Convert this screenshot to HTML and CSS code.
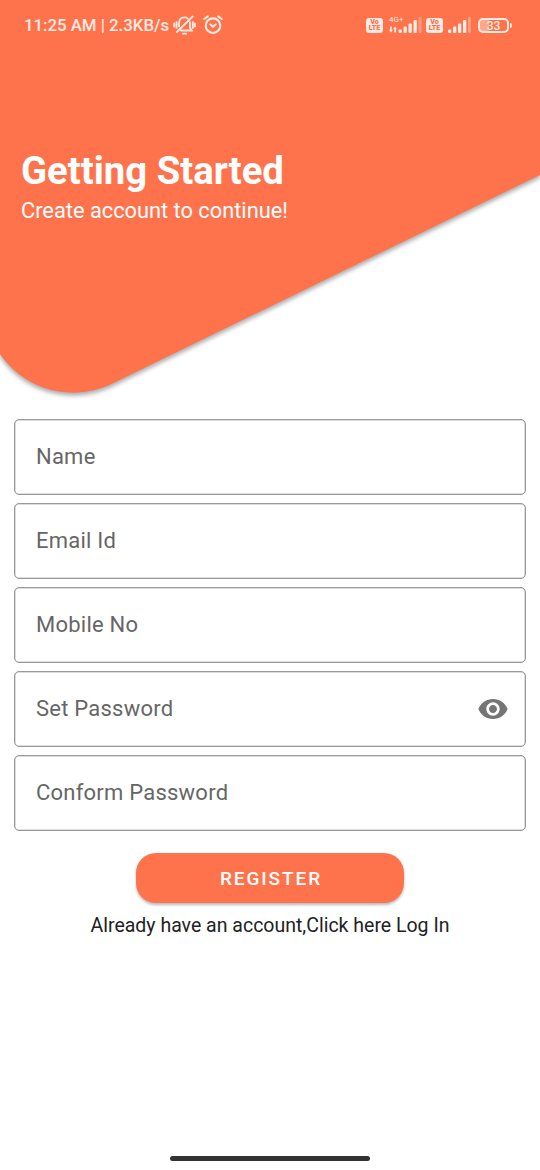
FILE: index.html
```html
<!DOCTYPE html>
<html lang="en">
<head>
<meta charset="utf-8">
<title>Getting Started</title>
<link rel="stylesheet" href="styles.css">
</head>
<body>
<main class="screen">
  <header class="hero">
    <svg class="hero-shape" width="540" height="410" viewBox="0 0 540 410" aria-hidden="true">
      <path d="M-20 -20H560V165.2L111.5 384A89 89 0 0 1 -8 340L-20 318Z"/>
    </svg>
    <div class="status">
      <span class="clock">11:25 AM | 2.3KB/s</span>
      <svg class="mute" width="23" height="22" viewBox="0 0 24 22" fill="none" stroke="currentColor" stroke-width="2" stroke-linecap="round">
        <path d="M6.300 12.300V9.300C6.300 5.500 8.500 3 12 3c1.400 0 2.500.4 3.400 1.100M17.700 8v6l1.800 2.700H8.500M10.300 20h3.400M4 18.300 20.500 2.200M3.700 8v6M1.200 9.500v3M20.700 8v6M22.900 9.500v3"/>
      </svg>
      <svg class="alarm" width="20" height="20" viewBox="0 0 20 20" fill="none" stroke="currentColor" stroke-width="2.100" stroke-linecap="round">
        <circle cx="10" cy="10.700" r="7.300"/><path d="M1.300 4 4.800 1.300M18.700 4 15.200 1.300M7.400 9.500 10 11.700 12.700 9.500"/>
      </svg>
      <span class="spacer"></span>
      <span class="volte"><b>Vo</b><b>LTE</b></span>
      <span class="network">
        <span class="gen">4G+</span>
        <svg width="34" height="16" viewBox="0 0 34 16" fill="currentColor">
          <path d="M2.700 9.500v3.200H4L1.900 15.500 0 12.700h1.200V9.500zM5.300 15.500v-3.200H4L6.100 9.500l1.900 2.800H6.900v3.200z"/>
          <rect x="9.500" y="12.500" width="3.300" height="3.500" rx="1"/><rect x="14.500" y="9.500" width="3.300" height="6.500" rx="1"/><rect x="19.500" y="6.500" width="3.300" height="9.500" rx="1"/><rect x="24.500" y="3" width="3.300" height="13" rx="1"/><rect x="29.500" y="0" width="3" height="16" rx="1" opacity=".35"/>
        </svg>
      </span>
      <span class="volte second"><b>Vo</b><b>LTE</b></span>
      <svg class="bars" width="24" height="16" viewBox="9.500 0 24 16" fill="currentColor">
        <rect x="9.500" y="12.500" width="3.300" height="3.500" rx="1"/><rect x="14.500" y="9.500" width="3.300" height="6.500" rx="1"/><rect x="19.500" y="6.500" width="3.300" height="9.500" rx="1"/><rect x="24.500" y="3" width="3.300" height="13" rx="1"/><rect x="29.500" y="0" width="3" height="16" rx="1" opacity=".35"/>
      </svg>
      <span class="battery">33</span><span class="battery-tip"></span>
    </div>
    <h1 class="title">Getting Started</h1>
    <p class="subtitle">Create account to continue!</p>
  </header>
  <form class="form">
    <div class="field"><span class="label">Name</span></div>
    <div class="field"><span class="label">Email Id</span></div>
    <div class="field"><span class="label">Mobile No</span></div>
    <div class="field"><span class="label">Set Password</span>
      <svg class="eye" width="32" height="32" viewBox="0 0 24 24" fill="currentColor"><path d="M12 4.500C7 4.500 2.730 7.610 1 12c1.730 4.390 6 7.500 11 7.500s9.270-3.110 11-7.500c-1.730-4.390-6-7.500-11-7.500zM12 17c-2.760 0-5-2.240-5-5s2.240-5 5-5 5 2.240 5 5-2.240 5-5 5zm0-8c-1.660 0-3 1.340-3 3s1.340 3 3 3 3-1.340 3-3-1.340-3-3-3z"/></svg>
    </div>
    <div class="field"><span class="label">Conform Password</span></div>
    <button class="register" type="button">REGISTER</button>
    <p class="login">Already have an account,Click here Log In</p>
  </form>
  <div class="home-bar"></div>
</main>
</body>
</html>
```
FILE: styles.css
```css
* { box-sizing: border-box; }
body { margin: 0; background: #fff; font-family: Roboto, "Liberation Sans", sans-serif; }
.screen { width: 540px; height: 1170px; display: flex; flex-direction: column; overflow: hidden; position: relative; }
.hero { height: 419px; flex: none; position: relative; isolation: isolate; color: #fff; }
.hero-shape { position: absolute; inset: 0; z-index: -1; fill: #ff734c; filter: drop-shadow(0 3px 2px rgba(0,0,0,.32)); }
.status { height: 50px; padding: 0 28px 0 24px; display: flex; align-items: center; color: #ffebe3; }
.clock { font-size: 16.800px; font-weight: 500; line-height: 20px; white-space: nowrap; width: 149px; }
.alarm { margin-left: 7px; }
.spacer { flex: 1; }
.volte { width: 17px; height: 15px; border-radius: 3px; background: #ffebe3; color: #f2744f; display: flex; flex-direction: column; align-items: center; justify-content: center; }
.volte b { font-size: 7px; line-height: 6px; font-weight: 900; }
.network { position: relative; margin-left: 6px; height: 16px; width: 34px; }
.network svg { display: block; }
.gen { position: absolute; left: 0; top: -2px; font-size: 8px; line-height: 9px; }
.second { margin-left: 3px; }
.bars { margin-left: 5px; }
.battery { margin-left: 6px; width: 31px; height: 15px; border: 2px solid #ffebe3; border-radius: 5px; background: linear-gradient(90deg, #ffa78b 33%, transparent 33%); font-size: 12px; font-weight: 500; line-height: 12px; text-align: center; }
.battery-tip { width: 2px; height: 5px; margin-left: 1px; border-radius: 0 2px 2px 0; background: #ffebe3; }
.title { margin: 97px 0 0 21px; font-size: 38.300px; line-height: 48px; font-weight: 700; }
.subtitle { margin: 3px 0 0 21px; font-size: 21.800px; line-height: 26px; }
.form { padding: 0 14px; display: flex; flex-direction: column; gap: 8px; }
.field { height: 76px; border: 1px solid #999; box-shadow: inset 0 0 0 .5px #bbb; border-radius: 5px; padding: 0 16px 0 21px; display: flex; align-items: center; justify-content: space-between; }
.label { font-size: 22px; letter-spacing: .23px; color: #666; line-height: 26px; margin-top: -1px; }
.eye { color: #757575; margin-top: -1px; }
.register { align-self: center; margin-top: 14px; width: 268px; height: 50px; padding: 1px 0 0 2px; border: 0; border-radius: 20px; background: #ff734c; color: #fff; font: 500 19px Roboto, sans-serif; letter-spacing: 1.900px; box-shadow: 0 2px 3px rgba(0,0,0,.28); }
.login { margin: 2px 0 0; text-align: center; font-size: 19.500px; line-height: 26px; color: #222; }
.home-bar { width: 200px; height: 5px; border-radius: 3px; background: #333; margin: auto auto 9px; }
```
